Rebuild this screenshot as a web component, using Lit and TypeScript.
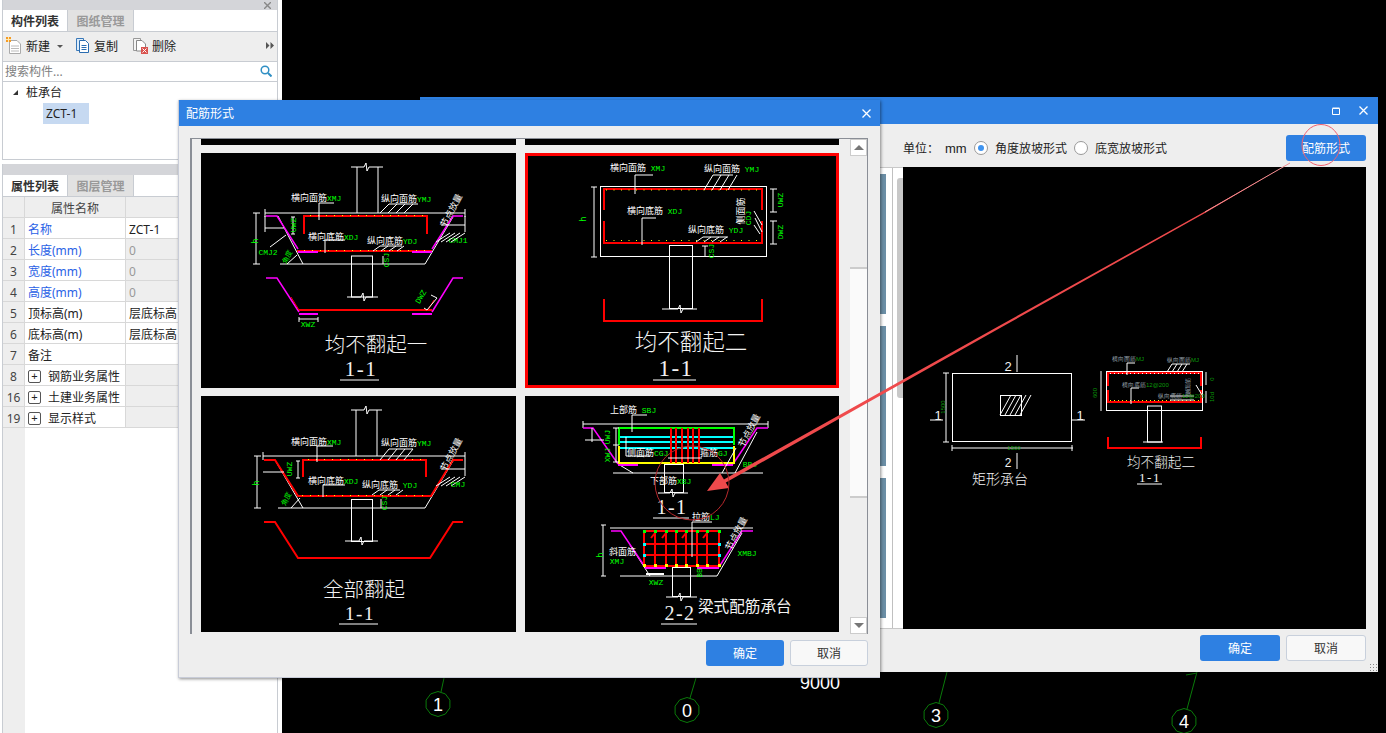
import { LitElement, css, html, svg } from "lit";
import { customElement } from "lit/decorators.js";

const RED = "#ff0000";
const MAG = "#ff00ff";
const GRN = "#00ff00";
const CYN = "#00ffff";
const YEL = "#ffff00";
const WHT = "#ffffff";

const line = (x1: number, y1: number, x2: number, y2: number, c = WHT, w = 1) =>
  svg`<line x1=${x1} y1=${y1} x2=${x2} y2=${y2} stroke=${c} stroke-width=${w}></line>`;

const poly = (pts: string, c = WHT, w = 1) =>
  svg`<polyline points=${pts} fill="none" stroke=${c} stroke-width=${w}></polyline>`;

const rect = (x: number, y: number, w: number, h: number, c = WHT, sw = 1) =>
  svg`<rect x=${x} y=${y} width=${w} height=${h} fill="none" stroke=${c} stroke-width=${sw}></rect>`;

const dots = (x1: number, x2: number, y: number, step = 8, c = YEL) => {
  const out = [];
  for (let x = x1; x <= x2; x += step) out.push(svg`<rect x=${x} y=${y} width="1" height="1" fill=${c}></rect>`);
  return out;
};

const hatch = (x: number, y: number, n: number, gap: number, dx: number, h: number) => {
  const out = [];
  for (let i = 0; i < n; i++) out.push(line(x + i * gap, y + h, x + i * gap + dx, y));
  return out;
};

// white chinese label with a green rebar code behind it
const label = (x: number, y: number, cn: string, code = "", size = 9) =>
  svg`<text x=${x} y=${y} class="lbl" font-size=${size}>${cn}<tspan class="code" font-size=${size - 1}>${code}</tspan></text>`;

const code = (x: number, y: number, t: string, rot = 0, size = 8) =>
  svg`<text x=${x} y=${y} class="code" font-size=${size} text-anchor="middle" transform=${`rotate(${rot} ${x} ${y})`}>${t}</text>`;

const rotText = (x: number, y: number, t: string, rot: number, size = 9) =>
  svg`<text x=${x} y=${y} class="lbl" font-size=${size} text-anchor="middle" transform=${`rotate(${rot} ${x} ${y})`}>${t}</text>`;

const title = (x: number, y: number, t: string, size: number) =>
  svg`<text x=${x} y=${y} class="ttl" font-size=${size} text-anchor="middle">${t}</text>`;

const section = (x: number, y: number, x1: number, x2: number, t = "1-1", size = 21) => svg`
  <text x=${x} y=${y} class="sec" font-size=${size} text-anchor="middle">${t}</text>
  ${line(x1, y + 4, x2, y + 4)}`;

// column stub with a break mark
const breakBar = (x1: number, x2: number, y: number, mx: number) =>
  poly(`${x1},${y} ${mx - 2},${y} ${mx},${y - 4} ${mx + 1},${y + 4} ${mx + 3},${y} ${x2},${y}`);

const drawingOne = svg`
  ${breakBar(351, 383, 167, 366)}
  ${line(357, 167, 357, 213)}${line(378, 167, 378, 213)}
  ${line(265, 213, 465, 213)}${line(265, 209, 265, 217)}${line(465, 209, 465, 217)}
  ${poly("278,216 303,264 425,264 453,217")}
  ${line(280, 264, 303, 264)}
  ${poly("304,234 304,216 427,216 427,234", RED, 2)}
  ${line(297, 251, 432, 251, RED, 2)}
  ${poly("266,216 277,216 298,249", MAG, 1.5)}
  ${line(298, 252, 318, 252, MAG, 2)}${line(412, 252, 432, 252, MAG, 2)}
  ${poly("432,249 453,216 463,216", MAG, 1.5)}
  ${dots(310, 425, 215)}${dots(304, 428, 250)}
  ${line(256, 213, 256, 264)}${line(253, 213, 260, 213)}${line(253, 264, 260, 264)}
  ${code(258, 241, "h", -90, 9)}
  ${line(265, 228, 284, 228)}${line(270, 247, 286, 235)}
  ${line(293, 217, 293, 234)}${line(291, 217, 295, 217)}${line(291, 234, 295, 234)}
  ${code(296, 225, "UWZ", -90)}
  ${poly("319,220 319,203 334,203")}
  ${hatch(380, 204, 4, 8, 9, 9)}${line(389, 204, 418, 204)}
  ${hatch(373, 246, 4, 8, 7, 5)}${line(380, 246, 402, 246)}
  ${poly("325,253 325,240 345,240")}
  ${code(268, 255, "CMJ2", 0)}${code(458, 243, "CMJ1", 0)}
  ${code(289, 258, "角度", -60, 7)}
  ${line(287, 264, 297, 255)}
  ${rect(351.5, 256, 21, 41)}
  ${breakBar(347, 378, 297, 363)}
  ${line(383, 256, 383, 264)}${code(389, 260, "CSJ", -90)}
  ${rotText(454, 212, "节点放量", -62)}
  ${hatch(436, 233, 4, 5, 14, 9)}
  ${line(265, 232, 265, 216)}${line(465, 232, 465, 216)}${line(441, 225, 465, 225)}
  ${poly("266,278 277,278 299,312", MAG, 1.5)}
  ${line(299, 310, 432, 310, RED, 2)}
  ${line(299, 314, 318, 314, MAG, 2)}${line(412, 314, 432, 314, MAG, 2)}
  ${poly("432,312 453,278 463,278", MAG, 1.5)}
  ${line(291, 297, 299, 310, RED, 1)}${line(434, 300, 428, 310, RED, 1)}
  ${line(299, 317, 299, 322)}${line(318, 317, 318, 322)}${line(299, 319, 318, 319)}
  ${code(308, 327, "XWZ")}
  ${poly("431,295 437,298 427,310 424,308")}
  ${code(423, 298, "DWZ", -60)}
  ${label(291, 201, "横向面筋", "XMJ")}${label(381, 202, "纵向面筋", "YMJ")}
  ${label(308, 240, "横向底筋", "XDJ")}${label(367, 244, "纵向底筋", "YDJ")}
  ${title(376, 352, "均不翻起一", 20.5)}
  ${section(361, 376, 340, 379)}
`;

const drawingTwo = svg`
  ${rect(600.5, 186.5, 166, 70)}
  ${poly("604,210 604,189 762,189 762,210", RED, 2)}
  ${poly("604,221 604,243 762,243 762,221", RED, 2)}
  ${dots(606, 760, 189.5, 7.5)}${dots(606, 760, 240, 7.5)}
  ${rect(669.5, 245.5, 23, 63)}
  ${breakBar(662, 697, 309, 680)}
  ${poly("604,299 604,321 762,321 762,299", RED, 2)}
  ${line(594, 187, 594, 257)}${line(591, 187, 597, 187)}${line(591, 257, 597, 257)}
  ${code(586, 219, "h", -90, 9)}
  ${line(773, 189, 773, 212)}${line(770, 189, 777, 189)}${line(770, 212, 777, 212)}
  ${line(773, 221, 773, 244)}${line(770, 221, 777, 221)}${line(770, 244, 777, 244)}
  ${code(783, 200, "UWZ", -90)}${code(783, 232, "DWZ", -90)}
  ${poly("635,194 635,175 653,175")}
  ${poly("642,245 642,218 656,218")}
  ${hatch(704, 175, 4, 8, 9, 15)}${line(713, 175, 733, 175)}
  ${hatch(696, 237, 4, 8, 7, 5)}${line(703, 237, 728, 237)}
  ${line(705, 246, 705, 257)}${line(702, 246, 708, 246)}
  ${code(714, 251, "CSJ", -90)}
  ${rotText(744, 211, "侧面筋", -90)}
  ${code(751, 218, "CDJ", -90)}
  ${line(754, 211, 762, 225)}${line(755, 218, 762, 232)}${line(754, 225, 760, 234)}
  ${label(610, 171, "横向面筋", " XMJ")}${label(704, 172, "纵向面筋", " YMJ")}
  ${label(627, 214, "横向底筋", " XDJ")}${label(688, 233, "纵向底筋", " YDJ")}
  ${title(691, 350, "均不翻起二", 22.5)}
  ${section(676, 376, 653, 696, "1-1", 23)}
`;

const drawingThree = svg`
  ${breakBar(351, 382, 410, 366)}
  ${line(356, 410, 356, 456)}${line(377, 410, 377, 456)}
  ${line(263, 456, 465, 456)}${line(263, 452, 263, 460)}${line(465, 452, 465, 460)}
  ${poly("275,460 303,508")}${line(278, 508, 425, 508)}${line(425, 508, 453, 461)}
  ${poly("264,460 275,460 298,496 431,496 453,460 463,460", RED, 2)}
  ${poly("303,477 303,460 426,460 426,477", RED, 2)}
  ${dots(308, 424, 459)}${dots(302, 428, 495)}
  ${line(257, 456, 257, 508)}${line(254, 456, 261, 456)}${line(254, 508, 261, 508)}
  ${code(259, 483, "h", -90, 9)}
  ${line(263, 472, 284, 472)}
  ${line(298, 461, 298, 478)}${line(296, 461, 300, 461)}${line(296, 478, 300, 478)}
  ${code(292, 469, "UWZ", -90)}
  ${code(288, 500, "角度", -60, 7)}
  ${line(291, 508, 300, 498)}
  ${poly("317,462 317,446 333,446")}${poly("323,497 323,485 345,485")}
  ${hatch(380, 449, 4, 8, 9, 11)}${line(389, 449, 413, 449)}
  ${hatch(372, 490, 4, 8, 7, 5)}${line(379, 490, 400, 490)}
  ${rect(351.5, 499.5, 21, 42)}
  ${breakBar(345, 378, 541, 361)}
  ${line(381, 499, 381, 508)}${code(387, 503, "CSJ", -90)}
  ${rotText(454, 456, "节点放量", -62)}
  ${hatch(436, 477, 4, 5, 14, 9)}${line(441, 469, 465, 469)}${line(465, 460, 465, 476)}
  ${poly("264,522 275,522 298,558 430,558 453,522 463,522", RED, 2)}
  ${code(458, 487, "CMJ")}
  ${label(291, 445, "横向面筋", "XMJ")}${label(381, 446, "纵向面筋", "YMJ")}
  ${label(308, 484, "横向底筋", "XDJ")}${label(362, 488, "纵向底筋", " YDJ")}
  ${title(364, 597, "全部翻起", 20.5)}
  ${section(360, 620, 339, 378, "1-1", 19)}
`;

const gridX = [644, 655, 666, 676, 686, 697, 707, 719];
const gridY = [531, 544, 555, 566];

const drawingFour = svg`
  ${line(583, 424, 768, 424)}${line(583, 421, 583, 428)}${line(768, 421, 768, 428)}
  ${line(618, 464, 633, 473)}${line(613, 473, 763, 473)}${line(735, 473, 757, 432)}
  ${poly("583,428 593,428 618,464", MAG, 1.5)}
  ${line(618, 465, 638, 465, MAG, 2)}${line(712, 465, 733, 465, MAG, 2)}
  ${poly("733,464 757,428 768,428", MAG, 1.5)}
  ${poly("619,445 619,428 734,428 734,445", GRN, 2)}
  ${line(620, 437, 733, 437, CYN, 2)}${line(620, 442, 733, 442, CYN, 2)}${line(620, 448, 733, 448, CYN, 2)}
  ${poly("619,446 619,463 734,463 734,446", YEL, 2)}
  ${[671, 676, 682, 688, 693, 699].map((x) => line(x, 428, x, 463, RED, 2))}
  ${line(668, 458, 702, 458)}
  ${line(592, 428, 592, 442)}${line(585, 440, 604, 440)}
  ${line(616, 428, 616, 462)}${line(613, 428, 619, 428)}${line(613, 445, 619, 445)}${line(613, 462, 619, 462)}
  ${code(610, 437, "UWJ", -90)}${code(610, 455, "XWJ", -90)}
  ${poly("632,432 632,415 647,415")}
  ${poly("626,437 626,456 650,456")}
  ${rect(664.5, 464.5, 19, 28)}
  ${breakBar(658, 688, 493, 672)}
  ${rotText(752, 432, "节点放量", -62)}
  ${line(722, 473, 736, 448)}${code(750, 467, "BBJ")}
  ${label(610, 413, "上部筋", " SBJ")}
  ${label(627, 456, "侧面筋", "CGJ")}${label(700, 456, "箍筋", "GJ")}
  ${label(650, 484, "下部筋", "XBJ")}
  ${section(672, 514, 653, 689, "1-1", 20)}
  ${line(610, 528, 753, 528)}${line(603, 525, 603, 576)}${line(601, 525, 606, 525)}${line(601, 576, 606, 576)}
  ${code(603, 555, "h", -90, 9)}
  ${line(620, 576, 717, 576)}${line(717, 576, 742, 533)}${line(630, 545, 650, 576)}
  ${poly("611,531 621,531 645,567", MAG, 1.5)}
  ${line(645, 568, 666, 568, MAG, 2)}${line(697, 568, 719, 568, MAG, 2)}
  ${poly("719,567 742,531 753,531", MAG, 1.5)}
  ${gridX.map((x) => line(x, 531, x, 566, RED, 2))}
  ${gridY.map((y) => line(644, y, 719, y, RED, 2))}
  ${[655, 666, 686, 707].map((x) => line(x - 4, 538, x, 533, RED, 2))}
  ${gridX.map((x) => svg`<rect x=${x - 1} y="530" width="3" height="3" fill=${GRN}></rect>`)}
  ${gridX.map((x) => svg`<rect x=${x - 1} y="564" width="3" height="3" fill=${YEL}></rect>`)}
  ${[544, 555].flatMap((y) => [644, 719].map((x) => svg`<rect x=${x - 1} y=${y - 1} width="3" height="3" fill=${CYN}></rect>`))}
  ${line(692, 522, 692, 557)}${line(692, 522, 712, 522)}
  ${rect(672.5, 567.5, 18, 29)}
  ${breakBar(666, 697, 597, 680)}
  ${line(646, 574, 664, 574, WHT, 2)}
  ${code(702, 573, "BB", -90)}
  ${rotText(739, 535, "节点放量", -62)}
  ${label(692, 520, "拉筋", "LJ")}
  ${label(609, 555, "斜面筋")}
  ${code(617, 564, "XMJ")}${code(747, 556, "XMBJ")}${code(656, 585, "XWZ")}
  ${section(680, 620, 661, 697, "2-2", 20)}
  <text x="698" y="612" class="ttl strong" font-size="15.6">梁式配筋承台</text>
`;

const preview = svg`
  ${rect(952.5, 373.5, 119, 68)}
  <rect x="1000.5" y="395.5" width="21" height="20" fill="none" stroke="#fff"></rect>
  ${hatch(1000, 395, 5, 5, 11, 20)}
  ${line(1017, 355, 1017, 372)}${line(1017, 453, 1017, 469)}
  ${line(930, 420, 943, 420)}${line(1072, 420, 1085, 420)}
  ${line(946, 373, 946, 442)}${line(943, 373, 949, 373)}${line(943, 442, 949, 442)}
  ${line(952, 448, 1073, 448)}${line(952, 445, 952, 451)}${line(1072, 445, 1072, 451)}
  <text x="1008" y="371" class="num" font-size="13" text-anchor="middle">2</text>
  <text x="1008" y="467" class="num" font-size="12" text-anchor="middle">2</text>
  <text x="938" y="420" class="num" font-size="13" text-anchor="middle">1</text>
  <text x="1080" y="420" class="num" font-size="13" text-anchor="middle">1</text>
  <text x="945" y="407" class="tiny" text-anchor="middle" transform="rotate(-90 945 407)">1500</text>
  <text x="1014" y="450" class="tiny" text-anchor="middle">1500</text>
  <text x="1000" y="484" class="ttl" font-size="14" text-anchor="middle">矩形承台</text>
  ${rect(1106.5, 371.5, 96, 39)}
  ${poly("1108,386 1108,373 1201,373 1201,386", RED, 2)}
  ${poly("1108,390 1108,402 1201,402 1201,390", RED, 2)}
  ${dots(1110, 1200, 373, 4, WHT)}${dots(1110, 1200, 400, 4, YEL)}
  ${rect(1147.5, 406, 14, 36)}
  ${line(1143, 442, 1163, 442)}
  ${poly("1108,437 1108,448 1201,448 1201,437", RED, 2)}
  ${line(1101, 371, 1101, 411)}
  ${poly("1127,375 1127,363 1135,363")}${poly("1131,404 1131,388 1139,388")}
  ${hatch(1167, 364, 4, 5, 5, 8)}${line(1172, 364, 1190, 364)}
  ${line(1206, 372, 1206, 385)}${line(1206, 391, 1206, 403)}
  ${line(1170, 396, 1194, 396)}${line(1170, 400, 1194, 400)}
  ${line(1196, 385, 1202, 395)}
  <text x="1112" y="361" class="tiny lblTiny">横向面筋<tspan class="tiny">MJ</tspan></text>
  <text x="1167" y="362" class="tiny lblTiny">纵向面筋<tspan class="tiny">MJ</tspan></text>
  <text x="1122" y="387" class="tiny lblTiny">横向底筋<tspan class="tiny">12@200</tspan></text>
  <text x="1158" y="398" class="tiny lblTiny">纵向底筋<tspan class="tiny">12@200</tspan></text>
  <text x="1097" y="393" class="tiny" text-anchor="middle" transform="rotate(-90 1097 393)">600</text>
  <text x="1185" y="391" class="tiny lblTiny" transform="rotate(-90 1190 391)">侧面筋</text>
  <text x="1214" y="379" class="tiny" text-anchor="middle" transform="rotate(-90 1214 379)">0</text>
  <text x="1214" y="397" class="tiny" text-anchor="middle" transform="rotate(-90 1214 397)">10d</text>
  <text x="1161" y="467" class="ttl" font-size="13.6" text-anchor="middle">均不翻起二</text>
  <text x="1150" y="482" class="sec" font-size="13" text-anchor="middle">1-1</text>
  ${line(1137, 484, 1162, 484)}
`;

const rows = [
  { n: 1, name: "名称", val: "ZCT-1", blue: true },
  { n: 2, name: "长度(mm)", val: "0", blue: true, off: true },
  { n: 3, name: "宽度(mm)", val: "0", blue: true, off: true },
  { n: 4, name: "高度(mm)", val: "0", blue: true, off: true },
  { n: 5, name: "顶标高(m)", val: "层底标高" },
  { n: 6, name: "底标高(m)", val: "层底标高" },
  { n: 7, name: "备注", val: "" },
  { n: 8, name: "钢筋业务属性", val: "", group: true },
  { n: 16, name: "土建业务属性", val: "", group: true },
  { n: 19, name: "显示样式", val: "", group: true },
];

const axes = [
  { t: "1", x: 438, y: 704, lx: 444, ly: 678 },
  { t: "0", x: 687, y: 710, lx: 696, ly: 678 },
  { t: "3", x: 936, y: 715, lx: 947, ly: 672 },
  { t: "4", x: 1184, y: 721, lx: 1197, ly: 672 },
];

const ring = (cx: number, cy: number, r: number) => {
  const pts = [];
  for (let i = 0; i < 10; i++) {
    const a = (i * Math.PI) / 5 + Math.PI / 10;
    pts.push(`${(cx + r * Math.cos(a)).toFixed(1)},${(cy + r * Math.sin(a)).toFixed(1)}`);
  }
  return pts.join(" ");
};

@customElement("app-root")
export class AppRoot extends LitElement {
  static styles = css`
    :host {
      display: block;
      position: relative;
      width: 1386px;
      height: 733px;
      overflow: hidden;
      background: #000;
      color: #222;
      font: 12px "Noto Sans", "Noto Sans CJK SC", sans-serif;
    }

    svg text { font-family: "Noto Sans CJK SC", sans-serif; }
    .lbl { fill: #fff; }
    .code { fill: #00ff00; font-family: "Liberation Mono", monospace; }
    svg .code { font-family: "Liberation Mono", monospace; }
    .ttl { fill: #f2f2f2; font-weight: 300; }
    .strong { font-weight: 400; }
    .sec { fill: #f2f2f2; letter-spacing: 1.5px; }
    svg .sec { font-family: "Liberation Serif", serif; }
    .num { fill: #f2f2f2; }
    svg .num { font-family: "Liberation Sans", sans-serif; }
    .tiny { fill: #0a9a0a; font-size: 6px; font-family: "Liberation Sans", sans-serif; }
    .lblTiny { fill: #9aa6b0; }

    .canvas { position: absolute; inset: 0; }
    .canvas text { fill: #fff; font-family: "Liberation Sans", sans-serif; }

    .side {
      position: absolute;
      left: 0;
      top: 0;
      width: 282px;
      height: 733px;
      background: #fff;
      padding-left: 2px;
      box-sizing: border-box;
      display: flex;
      flex-direction: column;
    }
    .panel {
      width: 276px;
      border: solid #c8ccd2;
      border-width: 0 1px;
      box-sizing: border-box;
      display: flex;
      flex-direction: column;
    }
    .list { height: 160px; border-bottom: 1px solid #c8ccd2; }
    .props { flex: 1; margin-top: 4px; }
    .bar {
      height: 10px;
      background: #d4d5d9;
      display: flex;
      justify-content: flex-end;
      align-items: center;
      padding-right: 6px;
      flex: none;
    }
    .props .bar { height: 11px; }
    .tabs {
      height: 22px;
      display: flex;
      flex: none;
      box-sizing: border-box;
      border-bottom: 1px solid #c8ccd2;
    }
    .tab {
      width: 64px;
      display: flex;
      align-items: center;
      justify-content: center;
      font-weight: 700;
      color: #333;
    }
    .tab.off {
      background: #e2e2e2;
      color: #999;
      font-weight: 700;
      border: solid #c8ccd2;
      border-width: 0 1px;
      width: 65px;
    }
    .tools {
      height: 30px;
      box-sizing: border-box;
      background: #eee;
      border-bottom: 1px solid #c8ccd2;
      display: flex;
      align-items: center;
      flex: none;
      padding: 0 0 2px 3px;
    }
    .tool { display: flex; align-items: center; gap: 4px; margin-right: 15px; }
    .tool.first { margin-right: 18px; }
    .tool.copy { gap: 5px; margin-right: 15px; }
    .caret {
      width: 0;
      height: 0;
      border: 3px solid transparent;
      border-top: 3px solid #555;
      border-bottom: 0;
      margin: 1px -5px 0 3px;
    }
    .more { margin-left: auto; margin-right: 3px; display: flex; }
    .search {
      height: 20px;
      box-sizing: border-box;
      display: flex;
      align-items: center;
      justify-content: space-between;
      padding: 0 5px 2px 2px;
      color: #808080;
      border-bottom: 1px solid #c8ccd2;
      flex: none;
    }
    .tree { padding: 0 0 0 10px; }
    .node { height: 20px; display: flex; align-items: center; gap: 8px; color: #222; }
    .leaf {
      margin: 1px 0 0 30px;
      width: 46px;
      height: 21px;
      background: #c6d9f1;
      display: flex;
      align-items: center;
      padding-left: 3px;
      box-sizing: border-box;
    }
    .tri {
      width: 0;
      height: 0;
      border-left: 5px solid transparent;
      border-bottom: 5px solid #333;
    }

    .table {
      flex: 1;
      display: grid;
      grid-template-columns: 22px 101px 1fr;
      grid-auto-rows: 21px;
      background: linear-gradient(#eee, #eee) 0 0 / 22px 100% no-repeat;
    }
    .table > div {
      display: flex;
      align-items: center;
      box-sizing: border-box;
      border: solid #d8d8d8;
      border-width: 0 1px 1px 0;
      white-space: nowrap;
      overflow: hidden;
      padding: 2px 0 0 3px;
    }
    .table .hd { background: #eee; justify-content: center; color: #444; padding: 2px 0 0; }
    .table .idx { background: #eee; justify-content: center; color: #444; padding: 2px 0 0; }
    .table .blue { color: #2a62e6; }
    .table .off { background: #eee; color: #999; }
    .plus {
      width: 11px;
      height: 11px;
      border: 1px solid #555;
      border-radius: 2px;
      margin: 0 7px 0 0;
      display: grid;
      place-items: center;
      flex: none;
      font: 11px/11px "Liberation Sans", sans-serif;
    }

    .win {
      position: absolute;
      background: #eee;
      box-shadow: 1px 1px 3px rgba(0, 0, 0, .45);
      display: flex;
      flex-direction: column;
      box-sizing: border-box;
    }
    .head {
      background: #2e80e2;
      color: #fff;
      display: flex;
      align-items: center;
      flex: none;
    }
    .back { left: 420px; top: 97px; width: 958px; height: 575px; }
    .back .head { height: 27px; justify-content: flex-end; gap: 19px; padding-right: 10px; }
    .opts {
      height: 43px;
      box-sizing: border-box;
      padding: 5px 12px 0 483px;
      display: flex;
      align-items: center;
      flex: none;
    }
    .opts .unit { width: 42px; }
    .opts .mm { width: 29px; font-family: "Liberation Sans", sans-serif; font-size: 13px; }
    .radio {
      width: 12px;
      height: 12px;
      border: 1px solid #999;
      border-radius: 50%;
      background: #fff;
      display: grid;
      place-items: center;
      margin-right: 7px;
      flex: none;
    }
    .radio.on::after {
      content: "";
      width: 6px;
      height: 6px;
      border-radius: 50%;
      background: #3f94f0;
    }
    .opts .rt { width: 79px; white-space: nowrap; }
    .btn {
      width: 80px;
      height: 26px;
      border-radius: 3px;
      background: #2e80e2;
      color: #fff;
      display: grid;
      place-items: center;
      box-sizing: border-box;
      flex: none;
    }
    .btn.ghost { background: #f8f8f8; color: #333; border: 1px solid #c8d0dc; }
    .opts .btn { margin-left: auto; }
    .main { height: 462px; display: flex; flex: none; }
    .thumbs {
      margin-left: 460px;
      width: 23px;
      box-sizing: border-box;
      background: #fff;
      display: flex;
      border: solid #c8c8c8;
      border-width: 1px 0;
    }
    .shots { width: 12px; display: flex; flex-direction: column; border-right: 1px solid #c0c0c0; }
    .shots div { height: 140px; margin: 6px 0; background: #6c8fa6; width: 6px; }
    .track { flex: 1; position: relative; }
    .track .thumb {
      position: absolute;
      left: 4px;
      right: 0;
      top: 10px;
      height: 220px;
      background: #c8c8c8;
      border-radius: 3px 0 0 3px;
    }
    .view { width: 463px; flex: none; background: #000; }
    .foot {
      flex: 1;
      display: flex;
      justify-content: flex-end;
      gap: 6px;
      padding: 6px 12px 0 0;
      position: relative;
    }
    .grip {
      position: absolute;
      right: 1px;
      bottom: 1px;
      width: 8px;
      height: 8px;
      background: radial-gradient(#888 40%, transparent 45%) 0 0 / 3px 3px;
    }

    .front { left: 178px; top: 100px; width: 702px; height: 578px; border: solid #c8ccd8; border-width: 0 0 1px 1px; }
    .front .head { height: 26px; justify-content: space-between; padding: 0 9px 0 7px; }
    .frame {
      margin: 12px 12px 0 11px;
      height: 496px;
      border: solid #8a8e96;
      border-width: 1px 1px 0 2px;
      display: flex;
      box-sizing: border-box;
      background: #eee;
    }
    .grid {
      width: 658px;
      padding-left: 9px;
      box-sizing: border-box;
      display: grid;
      grid-template-columns: 315px 314px;
      grid-template-rows: 6px 235px 236px;
      column-gap: 9px;
      row-gap: 8px;
      flex: none;
    }
    .stub, .shot { background: #000; display: block; }
    .shot.sel { outline: 3px solid #f00; outline-offset: -3px; }
    .shot svg, .view svg { display: block; }
    .scroll { width: 17px; display: flex; flex-direction: column; flex: none; background: #eee; }
    .arr {
      height: 17px;
      background: #fff;
      border: 1px solid #ccc;
      box-sizing: border-box;
      display: grid;
      place-items: center;
      flex: none;
    }
    .arr i { width: 0; height: 0; border: 5px solid transparent; border-top: 0; border-bottom: 5px solid #777; }
    .arr.down i { transform: rotate(180deg); }
    .gap1 { height: 111px; flex: none; }
    .knob { height: 231px; background: #fafafa; border-top: 2px solid #ccc; border-bottom: 2px solid #ccc; box-sizing: border-box; flex: none; }
    .gap2 { flex: 1; }
    .front .btn { width: 78px; }

    .ink { position: absolute; inset: 0; pointer-events: none; }
  `;

  private arrow() {
    return html`<svg class="ink" width="1386" height="733" viewBox="0 0 1386 733">
      <polygon points="723,480 725,483 1000,328 1205,213 1290,163 1204,212 999,326" fill="#ef4a4c"></polygon>
      <polygon points="707,491 720,473 729,488" fill="#ef4a4c"></polygon>
      <line x1="1205" y1="212" x2="1290" y2="163" stroke="#f08f93" stroke-width="1"></line>
      <circle cx="692" cy="483" r="37" fill="none" stroke="#b8282c" stroke-width="1"></circle>
      <ellipse cx="1321" cy="145" rx="19" ry="20.5" fill="none" stroke="#f06070" stroke-width="1"></ellipse>
    </svg>`;
  }

  private canvas() {
    return html`<svg class="canvas" width="1386" height="733" viewBox="0 0 1386 733">
      ${axes.map(
        (a) => svg`
          <line x1=${a.x + 3} y1=${a.y - 12} x2=${a.lx} y2=${a.ly} stroke="#0a7a0a"></line>
          <polygon points=${ring(a.x, a.y, 12.5)} fill="none" stroke="#0a7a0a"></polygon>
          <text x=${a.x} y=${a.y + 7} font-size="18" text-anchor="middle">${a.t}</text>`,
      )}
      <line x1="1186" y1="675" x2="1197" y2="673" stroke="#0a7a0a"></line>
      <text x="800" y="689" font-size="18">9000</text>
    </svg>`;
  }

  private side() {
    return html`<div class="side">
      <div class="panel list">
        <div class="bar">
          <svg width="7" height="7" viewBox="0 0 7 7"><path d="M0 0 7 7M7 0 0 7" stroke="#888" stroke-width="1.4"></path></svg>
        </div>
        <div class="tabs"><div class="tab">构件列表</div><div class="tab off">图纸管理</div></div>
        <div class="tools">
          <div class="tool first">
            <svg width="16" height="17" viewBox="0 0 16 17">
              <path d="M3.5 3.5H11L14.5 7V16.5H3.5Z" fill="#fff" stroke="#aaa"></path>
              <path d="M5 9H13M5 11.5H13M5 14H13" stroke="#bbb"></path>
              <path d="M0 0H5V5H0Z" fill="#f59a23"></path>
              <path d="M2.5 0V5M0 2.5H5" stroke="#ffe9b0"></path>
            </svg>
            新建<span class="caret"></span>
          </div>
          <div class="tool copy">
            <svg width="13" height="15" viewBox="0 0 13 15">
              <path d="M.5.5H7.5V12.5H.5Z" fill="#dcecfa" stroke="#3a78b8"></path>
              <path d="M3.5 2.5H9.5L12.5 5.5V14.5H3.5Z" fill="#fff" stroke="#2a6cb0"></path>
              <path d="M5.5 7.5H10.5M5.5 9.5H10.5M5.5 11.5H10.5" stroke="#2a6cb0"></path>
            </svg>
            复制
          </div>
          <div class="tool">
            <svg width="15" height="16" viewBox="0 0 15 16">
              <path d="M.5.5H7.5V12.5H.5Z" fill="#f4f4f4" stroke="#999"></path>
              <path d="M3.5 2.5H9L12.5 6V13H3.5Z" fill="#fff" stroke="#888"></path>
              <path d="M8 9H15V16H8Z" fill="#d9534f"></path>
              <path d="M9.5 10.5 13.5 14.5M13.5 10.5 9.5 14.5" stroke="#fff"></path>
            </svg>
            删除
          </div>
          <div class="more">
            <svg width="8" height="7" viewBox="0 0 8 7"><path d="M0 0 3.5 3.5 0 7ZM4.5 0 8 3.5 4.5 7Z" fill="#555"></path></svg>
          </div>
        </div>
        <div class="search">
          <span>搜索构件...</span>
          <svg width="12" height="12" viewBox="0 0 12 12">
            <circle cx="5" cy="5" r="3.8" fill="none" stroke="#2f8fc4" stroke-width="1.5"></circle>
            <path d="M8 8 11.5 11.5" stroke="#2f8fc4" stroke-width="2"></path>
          </svg>
        </div>
        <div class="tree">
          <div class="node"><span class="tri"></span>桩承台</div>
          <div class="leaf">ZCT-1</div>
        </div>
      </div>
      <div class="panel props">
        <div class="bar"></div>
        <div class="tabs"><div class="tab">属性列表</div><div class="tab off">图层管理</div></div>
        <div class="table">
          <div class="hd"></div><div class="hd">属性名称</div><div class="hd">属性值</div>
          ${rows.map(
            (r) => html`
              <div class="idx">${r.n}</div>
              <div class=${r.blue ? "blue" : ""}>
                ${r.group ? html`<span class="plus">+</span>` : ""}${r.name}
              </div>
              <div class="val ${r.off || r.group ? "off" : ""}">${r.val}</div>
            `,
          )}
        </div>
      </div>
    </div>`;
  }

  private backWindow() {
    return html`<div class="win back">
      <div class="head">
        <svg width="8" height="8" viewBox="0 0 8 8"><path d="M.5 1.5H7.5V7.5H.5ZM.5 1H7.5" fill="none" stroke="#fff"></path></svg>
        <svg width="9" height="9" viewBox="0 0 9 9"><path d="M.5.5 8.5 8.5M8.5.5 .5 8.5" stroke="#fff" stroke-width="1.3"></path></svg>
      </div>
      <div class="opts">
        <span class="unit">单位：</span><span class="mm">mm</span>
        <span class="radio on"></span><span class="rt">角度放坡形式</span>
        <span class="radio"></span><span class="rt">底宽放坡形式</span>
        <span class="btn">配筋形式</span>
      </div>
      <div class="main">
        <div class="thumbs">
          <div class="shots"><div></div><div></div><div></div></div>
          <div class="track"><div class="thumb"></div></div>
        </div>
        <div class="view">
          <svg width="463" height="462" viewBox="903 167 463 462">${preview}</svg>
        </div>
      </div>
      <div class="foot">
        <span class="btn">确定</span><span class="btn ghost">取消</span>
        <span class="grip"></span>
      </div>
    </div>`;
  }

  private frontWindow() {
    return html`<div class="win front">
      <div class="head">
        <span>配筋形式</span>
        <svg width="9" height="9" viewBox="0 0 9 9"><path d="M.5.5 8.5 8.5M8.5.5 .5 8.5" stroke="#fff" stroke-width="1.3"></path></svg>
      </div>
      <div class="frame">
        <div class="grid">
          <div class="stub"></div>
          <div class="stub"></div>
          <div class="shot"><svg width="315" height="235" viewBox="201 153 315 235">${drawingOne}</svg></div>
          <div class="shot sel"><svg width="314" height="235" viewBox="525 153 314 235">${drawingTwo}</svg></div>
          <div class="shot"><svg width="315" height="236" viewBox="201 396 315 236">${drawingThree}</svg></div>
          <div class="shot"><svg width="314" height="236" viewBox="525 396 314 236">${drawingFour}</svg></div>
        </div>
        <div class="scroll">
          <div class="arr"><i></i></div>
          <div class="gap1"></div>
          <div class="knob"></div>
          <div class="gap2"></div>
          <div class="arr down"><i></i></div>
        </div>
      </div>
      <div class="foot">
        <span class="btn">确定</span><span class="btn ghost">取消</span>
      </div>
    </div>`;
  }

  render() {
    return html`${this.canvas()}${this.side()}${this.backWindow()}${this.frontWindow()}${this.arrow()}`;
  }
}
